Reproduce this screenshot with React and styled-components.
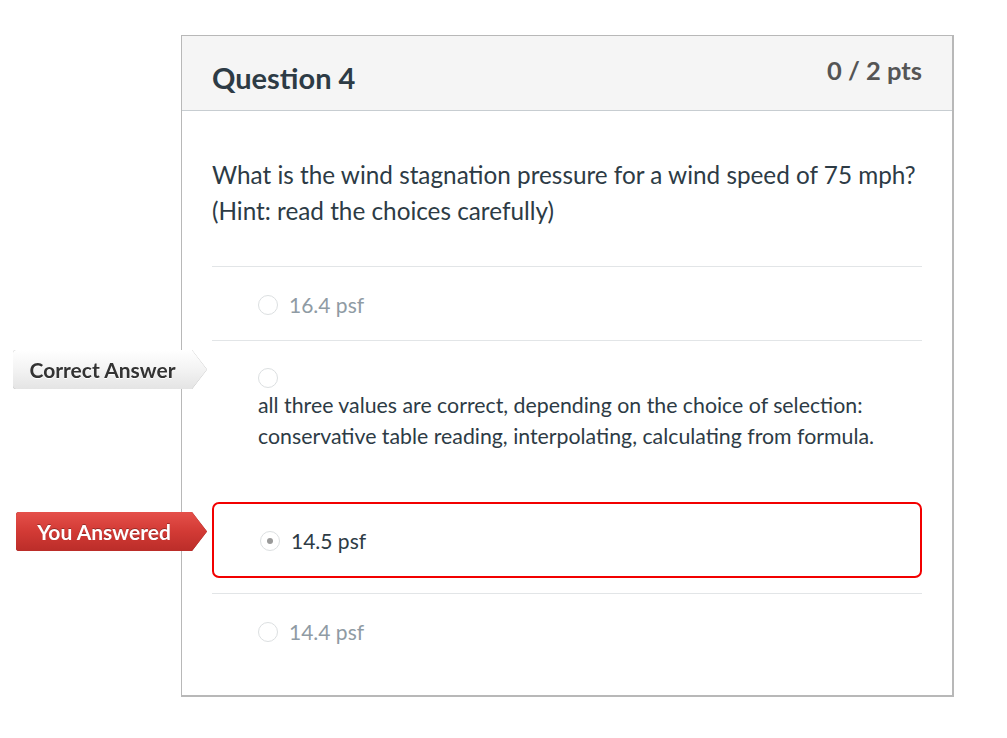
import React from 'react';
import styled, { createGlobalStyle } from 'styled-components';

const GlobalStyle = createGlobalStyle`
    body {
        margin: 0;
        background: #ffffff;
        font-family: Lato, "Open Sans", "Liberation Sans", sans-serif;
    }
`;

const Page = styled.div`
    padding: 35px 0 0 181px;
`;

const Card = styled.div`
    width: 770px;
    border: 1px solid #b8b8b8;
    border-right-width: 2px;
    border-bottom-width: 2px;
    background: #fff;
`;

const Header = styled.div`
    display: flex;
    justify-content: space-between;
    align-items: flex-start;
    height: 74px;
    padding: 0 30px;
    background: #f5f5f5;
    border-bottom: 1px solid #c7cdd1;
`;

const Title = styled.h2`
    margin: 0;
    padding-top: 26px;
    font-size: 29px;
    font-weight: 700;
    line-height: 32px;
    color: #2d3b45;
`;

const Points = styled.div`
    padding-top: 20px;
    font-size: 25.5px;
    font-weight: 700;
    line-height: 28px;
    color: #555555;
`;

const Body = styled.div`
    padding: 46px 30px 28px;
`;

const QuestionText = styled.p`
    margin: 0 0 37px;
    font-size: 24.3px;
    line-height: 36px;
    white-space: nowrap;
    color: #2d3b45;
`;

const Answer = styled.div`
    position: relative;
    border-top: 1px solid #e2e5e7;
    padding: 27px 0 24px 46px;
`;

const Selected = styled.div`
    position: relative;
    margin: 26px 0 15px;
    border: 2px solid #f20000;
    border-radius: 7px;
    padding: 26px 0 24px 46px;
`;

const Choice = styled.div`
    display: flex;
    align-items: ${p => (p.$stacked ? 'flex-start' : 'center')};
    flex-direction: ${p => (p.$stacked ? 'column' : 'row')};
    gap: ${p => (p.$stacked ? '2px' : '11px')};
    font-size: ${p => (p.$stacked ? '21.3px' : '21px')};
    line-height: ${p => (p.$stacked ? '31px' : '22px')};
    color: ${p => (p.$muted ? '#8f9ba4' : '#2d3b45')};
`;

const Radio = styled.span`
    flex: none;
    position: relative;
    width: 20px;
    height: 20px;
    box-sizing: border-box;
    border-radius: 50%;
    border: 1px solid #dcdfe1;
    background: #fff;

    &::after {
        content: '';
        display: ${p => (p.$checked ? 'block' : 'none')};
        position: absolute;
        left: 6px;
        top: 6px;
        width: 6px;
        height: 6px;
        border-radius: 50%;
        background: #9a9a9a;
    }
`;

const Tag = styled.div`
    position: absolute;
    top: ${p => p.$top}px;
    left: ${p => p.$left}px;
    filter: drop-shadow(0 0 0.6px ${p => (p.$tone === 'red' ? '#8a1c18' : '#9a9a9a')});
`;

const TagBody = styled.div`
    box-sizing: border-box;
    width: ${p => p.$width}px;
    height: 39px;
    padding-right: 15px;
    display: flex;
    align-items: center;
    justify-content: center;
    border-radius: 3px 0 0 3px;
    clip-path: polygon(0 0, calc(100% - 15px) 0, 100% 50%, calc(100% - 15px) 100%, 0 100%);
    font-size: 21px;
    font-weight: 700;
    white-space: nowrap;
    background: ${p =>
        p.$tone === 'red'
            ? 'linear-gradient(to bottom, #e5504a 0%, #d23a35 50%, #bb2d29 100%)'
            : 'linear-gradient(to bottom, #ffffff 0%, #f3f3f3 50%, #e4e4e4 100%)'};
    color: ${p => (p.$tone === 'red' ? '#ffffff' : '#333333')};
    text-shadow: ${p => (p.$tone === 'red' ? '0 -1px 0 rgba(0,0,0,0.3)' : '0 1px 0 #fff')};
`;

const Label = ({ tone, top, left, width, children }) => (
    <Tag $tone={tone} $top={top} $left={left}>
        <TagBody $tone={tone} $width={width}>{children}</TagBody>
    </Tag>
);

const App = () => {
    return (
        <Page>
            <GlobalStyle />
            <Card>
                <Header>
                    <Title>Question 4</Title>
                    <Points>0 / 2 pts</Points>
                </Header>
                <Body>
                    <QuestionText>
                        What is the wind stagnation pressure for a wind speed of 75 mph?<br />
                        (Hint: read the choices carefully)
                    </QuestionText>

                    <Answer>
                        <Choice $muted>
                            <Radio />
                            16.4 psf
                        </Choice>
                    </Answer>

                    <Answer>
                        <Label tone="gray" top={9} left={-199} width={194}>Correct Answer</Label>
                        <Choice $stacked>
                            <Radio />
                            <div>
                                all three values are correct, depending on the choice of selection:
                                conservative table reading, interpolating, calculating from formula.
                            </div>
                        </Choice>
                    </Answer>

                    <Selected>
                        <Label tone="red" top={8} left={-198} width={191}>You Answered</Label>
                        <Choice>
                            <Radio $checked />
                            14.5 psf
                        </Choice>
                    </Selected>

                    <Answer>
                        <Choice $muted>
                            <Radio />
                            14.4 psf
                        </Choice>
                    </Answer>
                </Body>
            </Card>
        </Page>
    );
};

export default App;
